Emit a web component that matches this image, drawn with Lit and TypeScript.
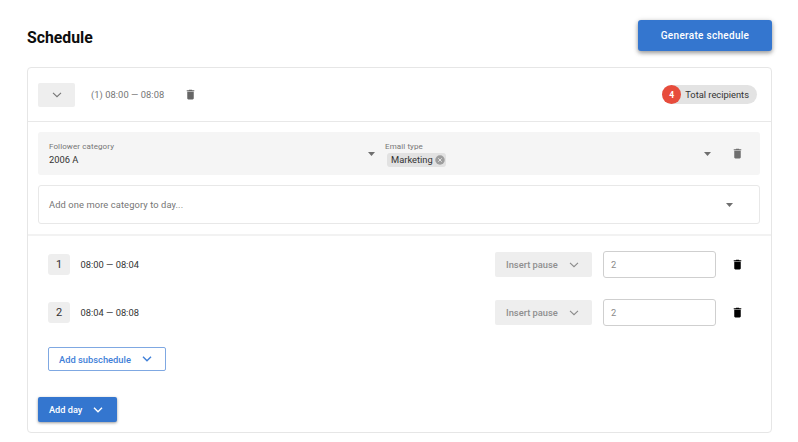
import { LitElement, html, css } from "lit";
import { customElement } from "lit/decorators.js";

const trash = (size: number) => html`<svg width=${size} height=${size} viewBox="0 0 24 24"><path fill="currentColor" d="M6 19c0 1.1.9 2 2 2h8c1.1 0 2-.9 2-2V7H6v12zM19 4h-3.5l-1-1h-5l-1 1H5v2h14V4z"/></svg>`;
const chevron = (w = 10, sw = 1.4) => html`<svg width=${w} height="8" viewBox="0 0 12 8"><path d="M1.2 1.4 6 6.1l4.8-4.7" fill="none" stroke="currentColor" stroke-width=${sw}/></svg>`;
const caret = () => html`<svg class="caret" width="7" height="4" viewBox="0 0 10 5" preserveAspectRatio="none"><path fill="currentColor" d="M0 0h10L5 5z"/></svg>`;

@customElement("app-root")
export class AppRoot extends LitElement {
  static styles = css`
    :host { display: block; width: 798px; height: 442px; background: #fff; font-family: Roboto, "Liberation Sans", sans-serif; color: #212121; overflow: hidden; }
    * { box-sizing: border-box; }
    .page { padding: 20px 26px 0 27px; }
    .top { display: flex; justify-content: space-between; align-items: center; height: 31px; }
    h1 { margin: 4px 0 0; font-size: 15.8px; font-weight: 700; color: #0d0d0d; line-height: 20px; }
    .gen { width: 134px; height: 31px; background: #3476cf; color: #fff; border-radius: 3px; font-size: 10px; font-weight: 500; letter-spacing: .3px; display: flex; align-items: center; justify-content: center; box-shadow: 0 2px 4px rgba(0,0,0,.35), 0 1px 6px rgba(0,0,0,.12); }
    .card { margin-top: 16px; width: 745px; height: 366px; border: 1px solid #e6e6e6; border-radius: 4px; display: flex; flex-direction: column; }
    .head { height: 54px; flex: none; border-bottom: 1px solid #e8e8e8; display: flex; align-items: center; padding: 0 14px 0 10px; }
    .toggle { width: 37px; height: 24px; background: #eeeeee; border-radius: 2px; display: flex; align-items: center; justify-content: center; color: #757575; }
    .span { margin-left: 16px; font-size: 9.33px; color: #757575; letter-spacing: .05px; }
    .ht { margin-left: 19.5px; color: #666; display: flex; }
    .total { margin-left: auto; display: flex; align-items: center; height: 19px; background: #e3e3e3; border-radius: 10px; font-size: 9.33px; color: #333; padding-right: 8px; }
    .num { width: 19px; height: 19px; border-radius: 50%; background: #e74c3c; color: #fff; font-size: 8.5px; font-weight: 700; display: flex; align-items: center; justify-content: center; margin-right: 4px; }
    .cats { padding: 10px 11px 0 10px; flex: none; }
    .filter { height: 43px; background: #f5f5f5; border-radius: 3px; display: flex; align-items: center; }
    .fld { display: flex; flex-direction: column; }
    .f1 { width: 330px; padding-left: 11px; }
    .f2 { flex: 1; padding-left: 10px; }
    .lab { font-size: 8px; line-height: 11px; color: #757575; letter-spacing: .1px; }
    .val { font-size: 9.33px; line-height: 14px; color: #333; margin-top: 1px; }
    .caret { color: #6f6f6f; flex: none; }
    .chip { display: inline-flex; align-items: center; height: 14px; background: #e2e2e2; border-radius: 3px; padding: 0 1.5px 0 4px; font-size: 9.33px; color: #333; margin-left: 2px; margin-top: 1px; align-self: flex-start; }
    .x { margin-left: 2px; display: flex; }
    .ft { margin: 0 16.5px 0 20px; color: #6f6f6f; display: flex; }
    .more { margin-top: 10px; height: 39px; border: 1px solid #e8e8e8; border-radius: 3px; display: flex; align-items: center; justify-content: space-between; padding: 0 26px 0 10px; font-size: 9.33px; color: #757575; letter-spacing: .1px; }
    .rule { margin-top: 10px; height: 2px; background: #f2f2f2; flex: none; }
    .rows { padding: 15px 0 0 20px; display: flex; flex-direction: column; gap: 21px; }
    .row { height: 27px; display: flex; align-items: center; padding-right: 27.5px; }
    .idx { width: 22px; height: 21px; background: #eeeeee; border-radius: 3px; font-size: 11px; display: flex; align-items: center; justify-content: center; color: #333; }
    .time { margin-left: 10.5px; font-size: 9.33px; color: #333; }
    .pause { margin-left: auto; width: 97px; height: 25px; background: #eeeeee; border-radius: 2px; font-size: 9.33px; font-weight: 500; color: #8f8f8f; display: flex; align-items: center; padding-left: 11px; gap: 11px; }
    .pause svg { color: #8a8a8a; }
    .input { margin-left: 10.5px; width: 113px; height: 27px; border: 1px solid #cfcfcf; border-radius: 3px; font-size: 9.33px; color: #8a8a8a; display: flex; align-items: center; padding-left: 7.5px; }
    .rt { margin-left: 15px; color: #000; display: flex; }
    .sub { margin: 21px 0 0 20px; width: 118px; height: 24px; border: 1px solid #7fa8e2; border-radius: 2px; color: #3f7fd8; font-size: 9.33px; font-weight: 500; display: flex; align-items: center; padding-left: 10px; gap: 11px; }
    .day { margin: 26px 0 0 10px; width: 79px; height: 25px; background: #3476cf; color: #fff; border-radius: 2px; font-size: 9.2px; font-weight: 500; display: flex; align-items: center; padding-left: 11px; gap: 11px; box-shadow: 0 1px 3px rgba(0,0,0,.4); }
  `;

  private row(n: number, t: string) {
    return html`<div class="row">
      <div class="idx">${n}</div>
      <div class="time">${t}</div>
      <div class="pause">Insert pause ${chevron(10, 1.3)}</div>
      <div class="input">2</div>
      <div class="rt">${trash(13)}</div>
    </div>`;
  }

  render() {
    return html`<div class="page">
      <div class="top">
        <h1>Schedule</h1>
        <div class="gen">Generate schedule</div>
      </div>
      <div class="card">
        <div class="head">
          <div class="toggle">${chevron(10, 1.3)}</div>
          <div class="span">(1) 08:00 — 08:08</div>
          <div class="ht">${trash(13)}</div>
          <div class="total"><span class="num">4</span>Total recipients</div>
        </div>
        <div class="cats">
          <div class="filter">
            <div class="fld f1"><span class="lab">Follower category</span><span class="val">2006 A</span></div>
            ${caret()}
            <div class="fld f2"><span class="lab">Email type</span>
              <span class="chip">Marketing<span class="x"><svg width="10" height="10" viewBox="0 0 11 11"><circle cx="5.5" cy="5.5" r="5.2" fill="#9e9e9e"/><path d="M3.6 3.6l3.8 3.8M7.4 3.6 3.6 7.4" stroke="#e2e2e2" stroke-width="1.1"/></svg></span></span>
            </div>
            ${caret()}
            <div class="ft">${trash(13)}</div>
          </div>
          <div class="more"><span>Add one more category to day...</span>${caret()}</div>
        </div>
        <div class="rule"></div>
        <div class="rows">
          ${this.row(1, "08:00 — 08:04")}
          ${this.row(2, "08:04 — 08:08")}
        </div>
        <div class="sub">Add subschedule ${chevron(10, 1.7)}</div>
        <div class="day">Add day ${chevron(10, 1.7)}</div>
      </div>
    </div>`;
  }
}
